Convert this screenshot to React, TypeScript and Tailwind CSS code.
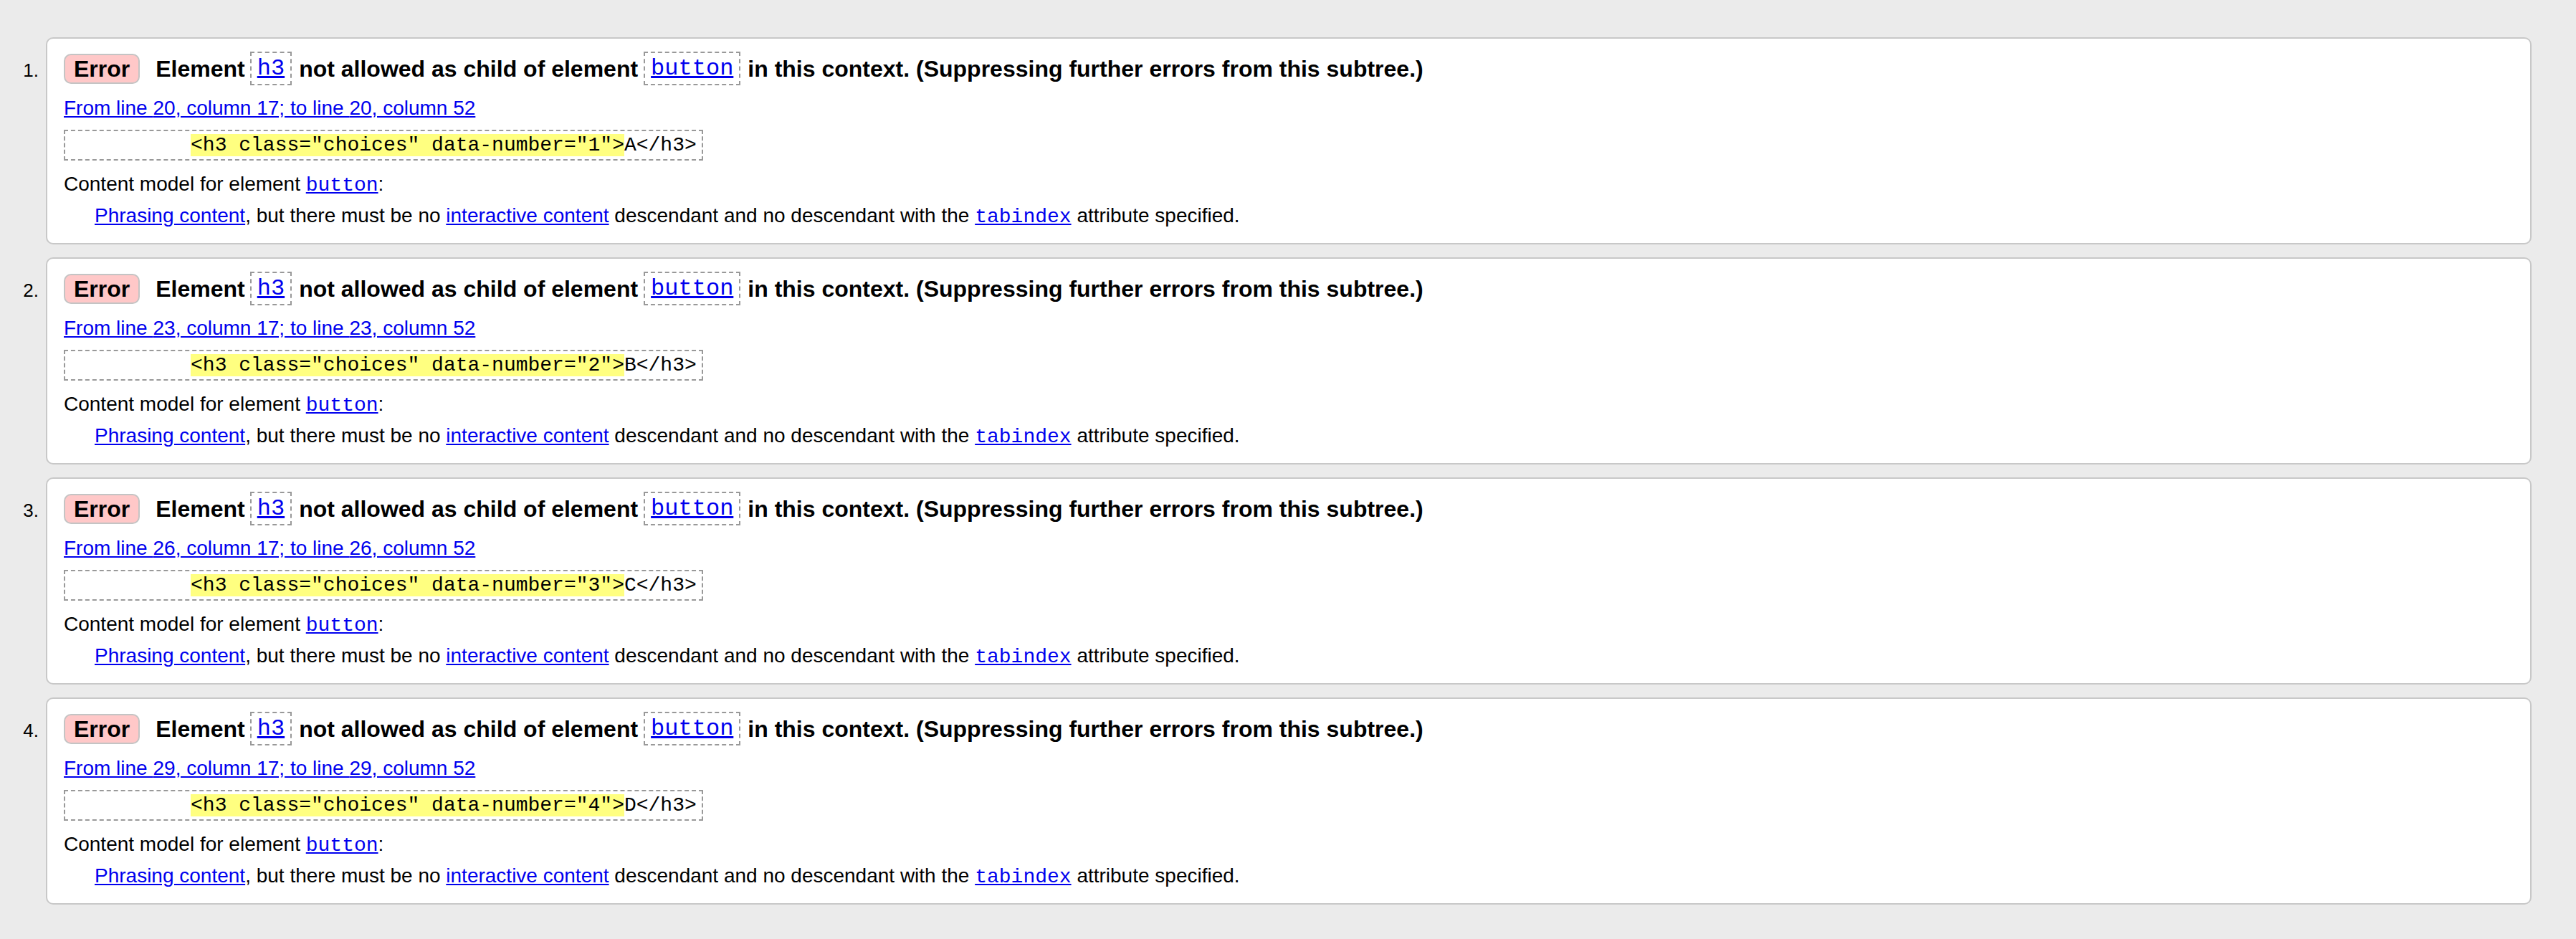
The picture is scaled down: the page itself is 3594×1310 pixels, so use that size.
import React from 'react';

const errors = [
  { n: 1, line: 20, letter: 'A' },
  { n: 2, line: 23, letter: 'B' },
  { n: 3, line: 26, letter: 'C' },
  { n: 4, line: 29, letter: 'D' },
];

const sans = "font-['Liberation_Sans',Arial,sans-serif]";
const mono = "font-['Liberation_Mono','Courier_New',monospace]";

function CodeLink({ children }: { children: React.ReactNode }) {
  return (
    <span className="flex border-2 border-dashed border-[#999] px-[8px] py-[5px]">
      <a href="#" className={`${mono} font-normal text-[32px] leading-[33px] text-[#0000ee] underline`}>
        {children}
      </a>
    </span>
  );
}

function ErrorItem({ n, line, letter }: { n: number; line: number; letter: string }) {
  const link = 'text-[#0000ee] underline';
  const monoLink = `${mono} leading-none text-[#0000ee] underline`;

  return (
    <li className="flex">
      <div className="w-[64px] shrink-0 pt-[33px] pr-[10px] text-right text-[26px] leading-[26px] text-black">
        {n}.
      </div>
      <div className="flex-1 bg-white border-2 border-[#c8c8c8] rounded-[10px] pl-[23px] pt-[18px] pb-[21px]">
        {/* heading */}
        <div className="flex items-center h-[47px] text-[32px] font-bold leading-none text-black whitespace-nowrap">
          <span className="bg-[#ffc8c8] border-2 border-[#c4c4c4] rounded-[10px] px-[12px] py-[3px]">
            Error
          </span>
          <span className="ml-[22px]">Element</span>
          <span className="ml-[7px]">
            <CodeLink>h3</CodeLink>
          </span>
          <span className="ml-[10px]">not allowed as child of element</span>
          <span className="ml-[8px]">
            <CodeLink>button</CodeLink>
          </span>
          <span className="ml-[10px]">in this context. (Suppressing further errors from this subtree.)</span>
        </div>

        <div className="mt-[15px] text-[28px] leading-[34px]">
          <a href="#" className={link}>
            From line {line}, column 17; to line {line}, column 52
          </a>
        </div>

        <div className="mt-[13px] flex">
          <code
            className={`${mono} border-2 border-dashed border-[#999] px-[7px] py-[4px] text-[28px] leading-[31px] text-black whitespace-pre`}
          >
            {'          '}
            <span className="bg-[#ffff80]">{`<h3 class="choices" data-number="${n}">`}</span>
            {`${letter}</h3>`}
          </code>
        </div>

        <dl className="mt-[16px] text-[28px] leading-[34px] text-black">
          <dt>
            Content model for element{' '}
            <a href="#" className={monoLink}>
              button
            </a>
            :
          </dt>
          <dd className="mt-[10px] ml-[43px]">
            <a href="#" className={link}>
              Phrasing content
            </a>
            , but there must be no{' '}
            <a href="#" className={link}>
              interactive content
            </a>{' '}
            descendant and no descendant with the{' '}
            <a href="#" className={monoLink}>
              tabindex
            </a>{' '}
            attribute specified.
          </dd>
        </dl>
      </div>
    </li>
  );
}

export default function App() {
  return (
    <div className={`${sans} min-h-[1310px] w-full bg-[#ebebeb] pt-[52px] pr-[62px]`}>
      <ol className="flex flex-col gap-[18px]">
        {errors.map((e) => (
          <ErrorItem key={e.n} {...e} />
        ))}
      </ol>
    </div>
  );
}
